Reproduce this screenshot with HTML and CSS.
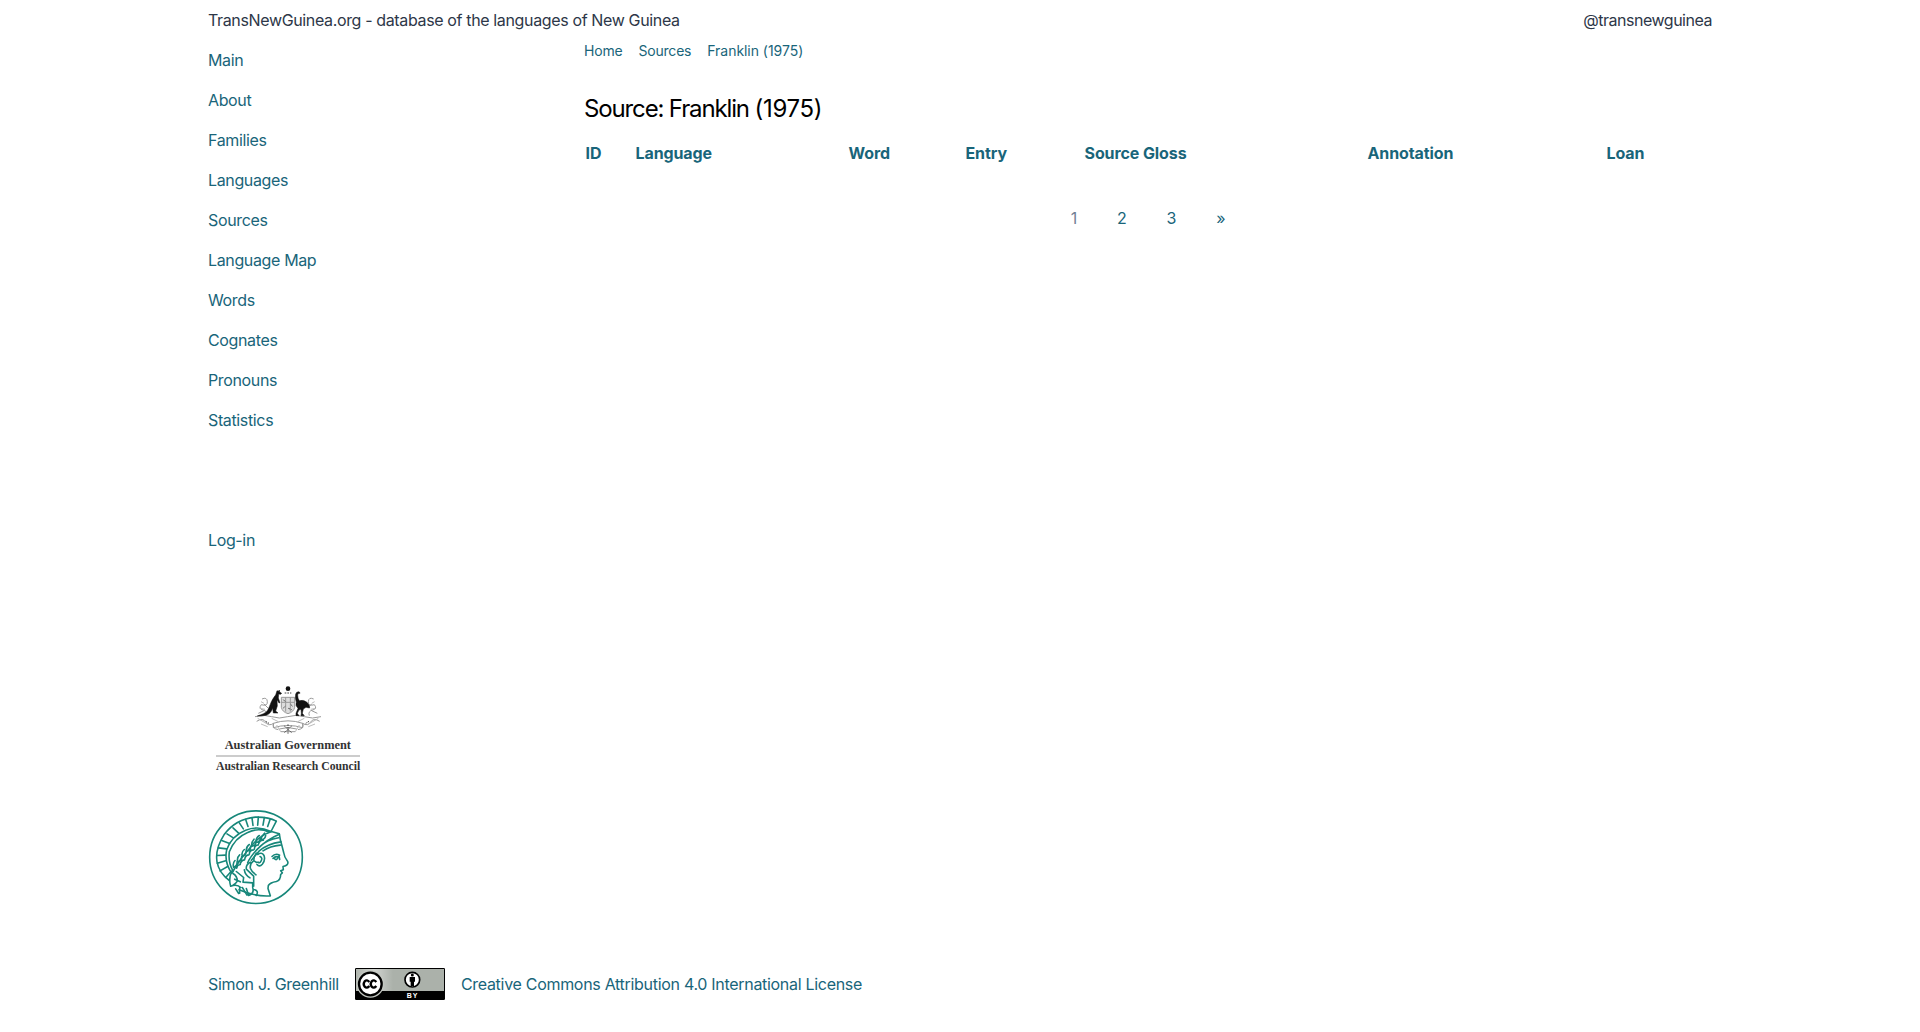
FILE: index.html
```html
<!DOCTYPE html>
<html lang="en">
<head>
<meta charset="utf-8">
<title>Source: Franklin (1975)</title>
<link rel="stylesheet" href="styles.css">
</head>
<body>
<div class="container">
  <header class="topbar"><span class="site">TransNewGuinea.org - database of the languages of New Guinea</span><a class="handle">@transnewguinea</a></header>
  <div class="columns">
    <aside class="sidebar">
      <ul class="menu">
        <li><a>Main</a></li>
        <li><a>About</a></li>
        <li><a>Families</a></li>
        <li><a>Languages</a></li>
        <li><a>Sources</a></li>
        <li><a>Language Map</a></li>
        <li><a>Words</a></li>
        <li><a>Cognates</a></li>
        <li><a>Pronouns</a></li>
        <li><a>Statistics</a></li>
      </ul>
      <ul class="menu login"><li><a>Log-in</a></li></ul>
      <svg class="arc" viewBox="9 6 480 309" role="img" aria-label="Australian Research Council">
        <g fill="none" stroke="#999" stroke-width="3">
          <path d="M229 67h40v30q-3 14-20 19-17-5-20-19zM229 82h40M242 67v43M256 67v43" fill="#ddd"/>
          <path d="M150 125q28-8 50 0t48 0 50 0 50 0M155 139q18-12 27 2t24 4q-6 16 14 19M344 139q-18-12-27 2t-24 4q6 16-14 19M205 145q44-15 88 0v13q-44-13-88 0z"/>
          <path d="M171 72q15-7 16 8t-18 9q-10 12 5 16t10 17M177 87l12 12M326 72q-15-7-16 8t18 9q10 12-5 16t-10 17M320 87l-12 12M160 115l17-8M337 115l-17-8M223 162q26-9 52 0M227 170h44"/>
          <path d="M168 80l9 5M164 100l16 3M158 130l34 20M200 130l20 10M329 80l-9 5M333 100l-16 3M340 130l-34 20M298 130l-20 10M215 150l12 20M283 150l-12 20M168 147l20 8M330 147l-20 8" stroke="#bbb"/>
        </g>
        <g fill="none" stroke="#444" stroke-width="3"><path d="M239 54h20M235 74l7 7M257 88l7 7M235 99l7-6M250 100l10 4M182 139l10 6M312 139l-10 6M238 153l22 20M260 153l-22 20M249 148v28" stroke-dasharray="5 3"/></g>
        <circle cx="249" cy="41" r="7" fill="#111"/>
        <g fill="#111" stroke="#111" stroke-width="1.5">
          <path d="M216 47l4 2 3-4 1 6 6 4-3 3-6-1-1 12 5 14-3 1-6-10 1 19-5 15 7 6h-14l-2-14q-6 17-20 21-12 3-26 2 24-6 31-17 5-10 11-26 8-15 13-20z"/>
          <path d="M272 57q2-7 9-7 4 1 4 5-7-1-7 5 0 12 5 17 12-4 23 5 9 8 8 17l-11-2-8 5-3 13 6 7h-10l1-7-1-12-6 2-5 10 5 7h-9v-7l6-15q-9-8-5-18-5-12-2-25z"/>
        </g>
        <text x="59" y="222" textLength="379" lengthAdjust="spacingAndGlyphs" class="crest-text">Australian Government</text>
        <path d="M33 243h432" stroke="#999" stroke-width="3"/>
        <text x="33" y="284" textLength="433" lengthAdjust="spacingAndGlyphs" class="crest-text crest-small">Australian Research Council</text>
      </svg>
      <svg class="minerva" viewBox="24 25.5 288 288" role="img" aria-label="Max Planck Society">
        <g fill="none" stroke="#17877a" stroke-width="4.8" stroke-linejoin="round" stroke-linecap="round">
          <circle cx="168" cy="170" r="139"/>
          <path d="M229 62Q205 49 166 50 106 56 72 103 45 145 51 184 57 217 88 240M229 62L213 93Q176 74 137 89 94 106 80 148 72 185 95 218M208 95Q175 80 143 96 104 112 88 154 84 187 99 211"/>
          <path d="M211 55l-8 23M193 51l-4 23M175 50l-2 24M156 52l3 23M137 57l7 21M118 67l12 18M99 82l16 15M81 100l19 12M65 120l24 9M55 142l25 3M51 165l25-1M52 188l25-7M60 211l23-13M77 231l17-19"/>
          <path d="M214 93l24 7 3 18q6 22 10 38 2 15 12 27 4 11-14 15l1 10-8 3 5 6-5 5q0 17-13 21-18 3-24 12l-1 9 7 22q-46 3-94-18"/>
          <path d="M213 94Q175 107 153 139 121 174 97 216M238 101Q200 117 173 145 150 169 143 187M243 124q-42 6-66 28l-23 27M241 134q-31 3-52 17M236 112q-34 5-57 27"/>
          <path d="M194 98q-10 9-11 20 13-2 14-13M178 105q-11 7-10 21 13-1 13-14M162 116q-9 10-6 21 12-2 12-14M148 132q-10 6-9 20 13-1 13-15M133 147q-10 8-6 20 12-3 11-15M119 163q-9 8-6 21 12-3 12-16M105 180q-8 8-4 21 12-5 10-17M190 119q-10-1-14 11M175 133q-12 1-12 13M161 148q-13 0-13 13M147 163q-11 0-13 14M134 178q-10 0-14 14M121 192q-10 1-11 11"/>
          <path d="M173 162q12-9 19 3 5 14-5 26-9 10-16 1M180 168q9 4 3 14-4 8-9 3M169 158q-9 11-7 23l8 5M160 182q-11 8-9 21 4 11 17 20M151 185q-14 7-12 21l22 21v30M133 208q2 15 17 24"/>
          <path d="M95 213q-10 22-3 44 20-7 30 4M99 219q13 8 13 23-4 7-13 12M109 213l22 18-2 14 29 2v12M121 244l-17-8M119 260v18M127 261l14 23M139 264l7 21q18-7 12-24M160 267q18 2 9 18M107 265l9 14"/>
          <path d="M216 168q10-11 23-4M219 174q8-9 18-4M223 174q6 7 10-1M239 177l-2-12"/>
        </g>
      </svg>
    </aside>
    <main class="content">
      <nav class="crumbs"><a>Home</a><a>Sources</a><a>Franklin (1975)</a></nav>
      <h1>Source: Franklin <span class="year">(1975)</span></h1>
      <table class="entries">
        <colgroup><col class="c-id"><col class="c-lang"><col class="c-word"><col class="c-entry"><col class="c-gloss"><col class="c-note"><col class="c-loan"></colgroup>
        <thead><tr><th>ID</th><th>Language</th><th>Word</th><th>Entry</th><th>Source Gloss</th><th>Annotation</th><th>Loan</th></tr></thead>
      </table>
      <nav class="pages"><span class="current">1</span><a>2</a><a>3</a><a>»</a></nav>
    </main>
  </div>
  <footer class="footer">
    <a>Simon J. Greenhill</a>
    <svg class="badge" viewBox="0 0 270 96" role="img" aria-label="CC BY">
      <defs><linearGradient id="shine"><stop offset="0" stop-color="#b0b5ae"/><stop offset=".2" stop-color="#d2d5d1"/><stop offset=".42" stop-color="#abb1aa"/></linearGradient></defs>
      <rect width="270" height="96" rx="4"/>
      <rect x="3" y="3" width="264" height="66" fill="url(#shine)"/>
      <circle cx="46" cy="48" r="41" fill="#c3c7c1"/>
      <circle cx="46" cy="48" r="34" fill="#fff" stroke="#000" stroke-width="7"/>
      <path d="M43 42q-7-9-14-2-6 8 0 16 7 7 14-2M64 42q-7-9-14-2-6 8 0 16 7 7 14-2" fill="none" stroke="#000" stroke-width="7"/>
      <circle cx="172" cy="35" r="22" fill="#fff" stroke="#000" stroke-width="5"/>
      <circle cx="172" cy="21" r="4.5"/>
      <path d="M164 27h16v14h-3v13h-10V41h-3z"/>
      <text x="155" y="90" textLength="32" class="badge-text">BY</text>
    </svg>
    <a class="license">Creative Commons Attribution 4.0 International License</a>
  </footer>
</div>
</body>
</html>
```
FILE: styles.css
```css
* { box-sizing: border-box; }
body { margin: 0; background: #fff; color: #2d3748; font: 16px/24px Inter, "Liberation Sans", sans-serif; letter-spacing: -0.3px; }
.container { width: 1504px; margin: 0 auto; }
a { color: #19657a; text-decoration: none; }
.topbar { display: flex; justify-content: space-between; height: 40px; padding-top: 8px; letter-spacing: -0.36px; }
.handle { color: #2d3748; letter-spacing: -0.48px; }
.columns { display: grid; grid-template-columns: 376px 1fr; height: 908px; }
.menu { list-style: none; margin: 0; padding: 0; letter-spacing: -0.36px; }
.menu li { height: 40px; padding: 8px 0; }
.menu.login { padding-top: 80px; }
.sidebar svg { display: block; }
.arc { width: 160px; height: 103px; margin-top: 117px; }
.minerva { width: 96px; height: 96px; margin-top: 29px; }
.crest-text { font: bold 37px "Liberation Serif", serif; letter-spacing: 0; fill: #333; }
.crest-small { font-size: 35px; }
.crumbs { display: flex; gap: 16px; font-size: 14px; line-height: 21px; letter-spacing: -0.2px; }
.crumbs a:last-child { letter-spacing: -0.04px; }
h1 { margin: 36px 0 0; font-size: 24px; line-height: 24px; font-weight: 400; letter-spacing: -1.14px; color: #000; }
.year { letter-spacing: -0.3px; }
.entries { table-layout: fixed; width: 1128px; margin-top: 19px; border-collapse: collapse; color: #19657a; letter-spacing: -0.1px; }
.entries th { padding: 1px 1px 1px 1.5px; text-align: left; font-weight: 700; }
.c-id { width: 50px; }
.c-lang { width: 213px; }
.c-word { width: 117px; }
.c-entry { width: 119px; }
.c-gloss { width: 283px; }
.c-note { width: 239px; }
.pages { display: flex; justify-content: center; gap: 40px; margin-top: 40px; letter-spacing: -0.2px; }
.current { color: #718096; }
.footer { display: flex; align-items: center; gap: 16px; height: 72px; }
.badge { width: 90px; height: 32px; }
.badge-text { font: bold 21px "Liberation Sans", sans-serif; fill: #fff; letter-spacing: 0; }
```
